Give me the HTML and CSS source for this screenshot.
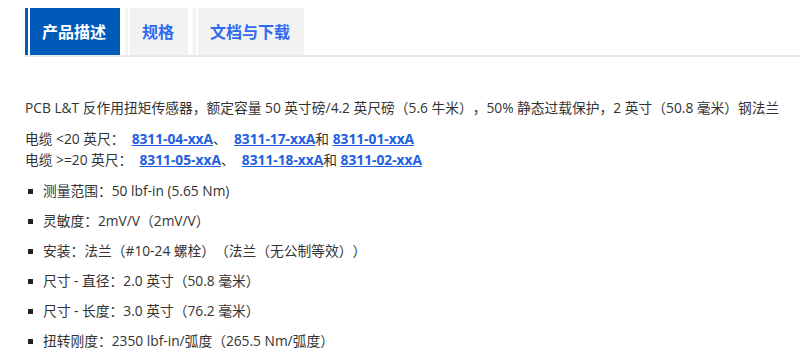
FILE: index.html
```html
<!DOCTYPE html>
<html lang="zh-CN">
<head>
    <meta charset="UTF-8">
    <meta name="viewport" content="width=device-width, initial-scale=1.0">
    <title>PCB L&amp;T 反作用扭矩传感器</title>
    <link rel="stylesheet" href="styles.css">
</head>
<body>

<div class="container">
    <ul class="tabs">
        <li class="tab active"><a href="#desc">产品描述</a></li>
        <li class="tab"><a href="#spec">规格</a></li>
        <li class="tab"><a href="#docs">文档与下载</a></li>
    </ul>

    <div class="panel" id="desc">
        <p class="intro">PCB L&amp;T 反作用扭矩传感器，额定容量 50 英寸磅/4.2 英尺磅（5.6 牛米），50% 静态过载保护，2 英寸（50.8 毫米）钢法兰</p>

        <p class="cables">
            电缆 &lt;20 英尺：&nbsp; <a href="#">8311-04-xxA</a>、&nbsp; <a href="#">8311-17-xxA</a>和 <a href="#">8311-01-xxA</a><br>
            电缆 &gt;=20 英尺：&nbsp; <a href="#">8311-05-xxA</a>、&nbsp; <a href="#">8311-18-xxA</a>和 <a href="#">8311-02-xxA</a>
        </p>

        <ul class="specs">
            <li>测量范围：50 lbf-in (5.65 Nm)</li>
            <li>灵敏度：2mV/V（2mV/V）</li>
            <li>安装：法兰（#10-24 螺栓）（法兰（无公制等效））</li>
            <li>尺寸 - 直径：2.0 英寸（50.8 毫米）</li>
            <li>尺寸 - 长度：3.0 英寸（76.2 毫米）</li>
            <li>扭转刚度：2350 lbf-in/弧度（265.5 Nm/弧度）</li>
        </ul>
    </div>
</div>

</body>
</html>
```

FILE: styles.css
```css
body {
    font-family: "Open Sans", "Noto Sans CJK SC", sans-serif;
    font-size: 13.75px;
    color: #333;
    margin: 0;
    background: #fff;
    text-spacing-trim: space-all;
}
.container {
    padding: 8px 0 0 25px;
}
.tabs {
    display: flex;
    gap: 5px;
    list-style: none;
    margin: 0;
    padding: 0;
    border-bottom: 2px solid #e6e8ee;
}
.tab {
    display: flex;
    border-left: 3px solid #f2f2f2;
}
.tab a {
    display: block;
    margin-left: 2px;
    height: 47px;
    line-height: 47px;
    padding: 0 14px 0 12px;
    background-color: #f2f2f2;
    color: #2f6bf0;
    font-family: "Noto Sans CJK SC", sans-serif;
    font-size: 16px;
    font-weight: bold;
    text-decoration: none;
}
.tab.active {
    border-left-color: #005bb8;
}
.tab.active a {
    background-color: #005bb8;
    color: #fff;
}
.panel {
    padding-top: 39px;
}
.intro {
    margin: 0 0 8px;
    line-height: 24px;
}
.cables {
    margin: 0 0 6px;
    line-height: 21px;
}
.cables a {
    color: #1f5fe0;
    font-weight: bold;
}
.specs {
    list-style: none;
    margin: 0;
    padding: 0;
}
.specs li {
    position: relative;
    padding-left: 18px;
    line-height: 30px;
}
.specs li::before {
    content: "";
    position: absolute;
    left: 3px;
    top: 13px;
    width: 5px;
    height: 5px;
    background: #222;
}
```
